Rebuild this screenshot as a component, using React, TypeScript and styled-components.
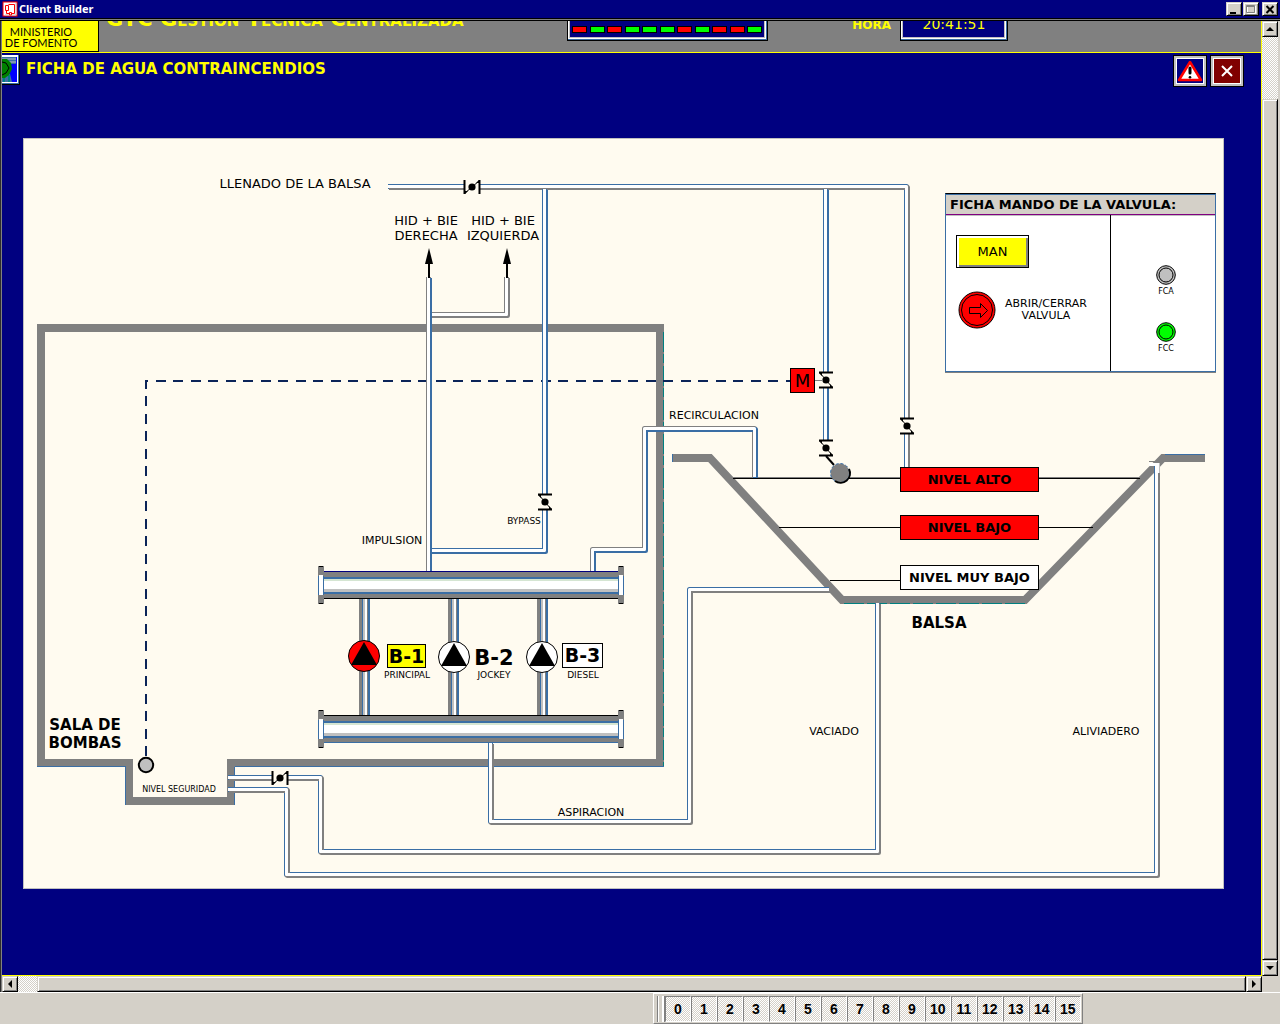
import React from "react";
import styled, { createGlobalStyle, css } from "styled-components";

const NAVY = "#000080";
const CHROME = "#d4d0c8";
const GRAY = "#808080";
const BLUE = "#3a6ea5";
const SILVER = "#c0c0c0";
const CREAM = "#fffbf0";
const YELLOW = "#ffff00";
const RED = "#ff0000";
const GREEN = "#00ff00";

const Global = createGlobalStyle`
  * { box-sizing: border-box; }
  html, body { margin: 0; padding: 0; }
  body { background: ${CHROME}; }
  body, button { font-family: "DejaVu Sans", Verdana, sans-serif; }
  button { margin: 0; padding: 0; color: #000; border-radius: 0; }
`;

const raised = css`
  border: 1px solid;
  border-color: ${CHROME} #000 #000 ${CHROME};
  box-shadow: inset 1px 1px 0 #fff, inset -1px -1px 0 ${GRAY};
  background: ${CHROME};
`;

const dither = css`
  background: repeating-conic-gradient(#fff 0 25%, ${CHROME} 0 50%) 0 0 / 2px 2px;
`;

const Shell = styled.div`
  display: flex;
  flex-direction: column;
  height: 100vh;
  overflow: hidden;
`;

/* ---------- window frame ---------- */

const TitleBar = styled.header`
  display: flex;
  align-items: center;
  gap: 1px;
  flex: none;
  height: 18px;
  padding: 0 2px;
  background: ${NAVY};
`;

const WindowTitle = styled.h1`
  flex: 1;
  margin: 0;
  font: bold 11px/16px "Noto Sans", Tahoma, sans-serif;
  color: #fff;
`;

const WindowButton = styled.button<{ $apart?: boolean }>`
  ${raised}
  display: grid;
  place-items: center;
  width: 16px;
  height: 14px;
  margin-left: ${(p) => (p.$apart ? "2px" : "0")};
`;

const FrameEdge = styled.div`
  flex: none;
  height: 3px;
  background: ${GRAY};
  border: solid #000;
  border-width: 1px 0;
`;

const Workspace = styled.main`
  display: grid;
  grid-template-columns: minmax(0, 1fr) 16px;
  grid-template-rows: minmax(0, 1fr) 16px;
  flex: 1;
  min-height: 0;
  padding-right: 2px;
  border-left: 2px groove ${GRAY};
`;

const Viewport = styled.div`
  overflow: hidden;
  background: ${NAVY};
  border: solid ${YELLOW};
  border-width: 0 1px 1px 0;
`;

/* ---------- scroll bars ---------- */

const ScrollBar = styled.div<{ $vertical?: boolean }>`
  display: flex;
  flex-direction: ${(p) => (p.$vertical ? "column" : "row")};
  ${dither}
`;

const ScrollArrow = styled.button`
  ${raised}
  display: grid;
  place-items: center;
  flex: none;
  width: 16px;
  height: 16px;
`;

const ScrollGap = styled.div<{ $size: number }>`
  flex: 0 0 ${(p) => p.$size}px;
`;

const ScrollThumb = styled.div`
  ${raised}
  flex: 1;
`;

/* ---------- banner ---------- */

const Banner = styled.div`
  display: flex;
  align-items: flex-end;
  height: 32px;
  overflow: hidden;
  background: ${GRAY};
  border-bottom: 1px solid ${YELLOW};
`;

const Ministry = styled.div`
  flex: none;
  width: 97px;
  height: 31px;
  padding: 5px 18px 0 0;
  background: ${YELLOW};
  border: solid #000;
  border-width: 0 1px 1px 0;
  font: 11px/11px Lato, "Gill Sans", sans-serif;
  text-align: center;
  white-space: nowrap;
`;

const BannerTitle = styled.div`
  flex: 0 0 468px;
  padding: 0 0 21px 7px;
  font: bold 21px/24px "DejaVu Sans", Verdana, sans-serif;
  font-variant: small-caps;
  white-space: nowrap;
  color: ${YELLOW};
`;

const Inset = styled.div<{ $width: number }>`
  display: flex;
  align-items: flex-end;
  justify-content: space-between;
  flex: 0 0 ${(p) => p.$width}px;
  height: 40px;
  margin-bottom: 11px;
  padding: 0 1px 4px;
  background: ${NAVY};
  border: 1px solid #000;
  box-shadow: inset -1px -1px 0 ${BLUE}, inset 1px 0 0 #fff, inset -2px -2px 0 #fff,
    inset 2px 0 0 ${SILVER}, inset -3px -3px 0 ${SILVER};
`;

const LedRow = styled(Inset)`
  padding: 0 5px 7px 4px;
`;

const Led = styled.span<{ $on: boolean }>`
  width: 15px;
  height: 7px;
  border: 1px solid #000;
  background: ${(p) => (p.$on ? GREEN : RED)};
`;

const Clock = styled(Inset)`
  justify-content: center;
  padding-bottom: 8px;
  font-size: 14px;
  line-height: 16px;
  color: ${YELLOW};
`;

const ClockLabel = styled.div`
  flex: 0 0 132px;
  padding: 0 9px 19px 0;
  font-size: 12px;
  font-weight: bold;
  line-height: 16px;
  text-align: right;
  color: ${YELLOW};
`;

const PageHead = styled.div`
  display: flex;
  align-items: flex-start;
  gap: 3px;
  height: 35px;
  padding: 2px 17px 0 0;
`;

const PageTitle = styled.h2`
  flex: 1;
  margin: 0 0 0 3px;
  font-size: 15px;
  font-weight: bold;
  line-height: 29px;
  color: ${YELLOW};
`;

const HeadButton = styled.button<{ $fill: string }>`
  display: grid;
  place-items: center;
  width: 34px;
  height: 32px;
  background: ${(p) => p.$fill};
  border: 1px solid #000;
  box-shadow: inset 0 0 0 2px ${SILVER}, inset 0 0 0 3px #fff;
`;

/* ---------- synoptic ---------- */

const Canvas = styled.section`
  position: relative;
  width: 1201px;
  height: 751px;
  margin: 50px 0 0 21px;
  background: ${CREAM};
  border: 1px solid ${SILVER};
`;

const Drawing = styled.svg`
  display: block;
  margin: -1px;
  font-family: "DejaVu Sans", Verdana, sans-serif;
`;

type TagProps = { $x: number; $y: number; $w: number; $h: number; $fill: string; $size: number };

const Tag = styled.div<TagProps>`
  position: absolute;
  left: ${(p) => p.$x}px;
  top: ${(p) => p.$y}px;
  display: flex;
  align-items: center;
  justify-content: center;
  width: ${(p) => p.$w}px;
  height: ${(p) => p.$h}px;
  background: ${(p) => p.$fill};
  border: 1px solid #000;
  font-size: ${(p) => p.$size}px;
  font-weight: bold;
  line-height: 1;
  white-space: nowrap;
`;

const Motor = styled(Tag)`
  font-weight: normal;
`;

const ValvePanel = styled.section`
  position: absolute;
  left: 921px;
  top: 54px;
  width: 271px;
  height: 179px;
  display: flex;
  flex-direction: column;
  background: #fff;
  border: 1px solid ${BLUE};
  border-top-color: #000;
  box-shadow: 0 1px 0 ${GRAY};
`;

const PanelTitle = styled.h3`
  flex: none;
  margin: 0;
  padding-left: 4px;
  background: ${CHROME};
  border-top: 1px solid ${BLUE};
  border-bottom: 1px solid #800080;
  box-shadow: 0 1px 0 ${SILVER};
  font-size: 13px;
  line-height: 19px;
  white-space: nowrap;
`;

const PanelBody = styled.div`
  display: flex;
  flex: 1;
  min-height: 0;
`;

const Commands = styled.div`
  display: flex;
  flex-direction: column;
  align-items: flex-start;
  gap: 23px;
  width: 165px;
  padding: 20px 0 0 10px;
  border-right: 1px solid #000;
`;

const ModeButton = styled.button`
  width: 73px;
  height: 33px;
  background: ${YELLOW};
  border: 1px solid #000;
  box-shadow: inset 2px 2px 0 #fff, inset -2px -2px 0 ${GRAY};
  font-size: 13px;
`;

const Command = styled.label`
  display: flex;
  align-items: center;
  gap: 9px;
  font-size: 11px;
  line-height: 12px;
  text-align: center;
`;

const RoundButton = styled.button`
  width: 38px;
  height: 38px;
  margin-left: 2px;
  background: none;
  border: 0;
`;

const Signals = styled.div`
  display: flex;
  flex-direction: column;
  align-items: center;
  gap: 24px;
  flex: 1;
  padding: 50px 0 0 6px;
`;

const Signal = styled.div`
  display: flex;
  flex-direction: column;
  align-items: center;
  font-size: 8px;
  line-height: 13px;
`;

/* ---------- bottom dock ---------- */

const Dock = styled.footer`
  display: flex;
  flex: none;
  height: 32px;
  padding-left: 51%;
  background: ${CHROME};
  border-top: 1px solid #fff;
`;

const ToolStrip = styled.nav`
  display: flex;
  align-items: center;
  height: 31px;
  padding: 0 1px 0 3px;
  border: 1px solid;
  border-color: #fff ${GRAY} ${GRAY} #fff;
`;

const Grip = styled.span`
  width: 8px;
  height: 26px;
  border: solid ${GRAY};
  border-width: 0 1px;
  box-shadow: inset 1px 0 0 #fff, inset -2px 0 0 #fff;
`;

const ToolButton = styled.button`
  ${dither}
  width: 26px;
  height: 26px;
  border: 1px solid;
  border-color: ${GRAY} #fff #fff ${GRAY};
  font: bold 14px/24px "Liberation Sans", Arial, sans-serif;
`;

/* ---------- drawing parts ---------- */

const Pipe = ({ d, a = BLUE, b = BLUE }: { d: string; a?: string; b?: string }) => (
  <g fill="none" strokeLinejoin="round">
    <path d={d} stroke={a} strokeWidth={5} />
    <path d={d} stroke={b} strokeWidth={5} transform="translate(1 1)" />
    <path d={d} stroke="#fff" strokeWidth={3} />
  </g>
);

const Valve = ({ x, y, upright }: { x: number; y: number; upright?: boolean }) => (
  <g transform={`translate(${x} ${y})${upright ? " rotate(90)" : ""}`}>
    <rect x={-7} y={-5} width={14} height={10} fill={CREAM} />
    <path d="M-7.500 -7V7M7.500 -7V7" stroke="#000" strokeWidth={2} />
    <path d="M-7 6L7 -6" stroke="#000" strokeWidth={1} />
    <path d="M-7 7V4L-4 4ZM7 -7V-4L4 -4Z" fill="#000" />
    <circle r={3.6} fill="#000" />
  </g>
);

const Manifold = ({ y, top, bottom }: { y: number; top: string; bottom: string }) => (
  <g transform={`translate(0 ${y})`} shapeRendering="crispEdges">
    <rect x={323} width={297} height={28} fill={GRAY} />
    <rect x={323} width={297} height={1} fill={top} />
    <rect x={323} y={27} width={297} height={1} fill={bottom} />
    <rect x={324} y={6} width={295} height={2} fill={BLUE} />
    <rect x={324} y={8} width={295} height={2} fill="#d5e5d2" />
    <rect x={324} y={10} width={295} height={8} fill="#fff" />
    <rect x={324} y={18} width={295} height={3} fill={SILVER} />
    <rect x={324} y={21} width={295} height={2} fill={BLUE} />
    {[318, 618].map((x) => (
      <g key={x}>
        <rect x={x} y={-5} width={6} height={38} fill={GRAY} />
        <rect x={x} y={5} width={6} height={19} fill={BLUE} />
        <rect x={x + 1} y={4} width={4} height={20} fill="#fff" />
        <path d={`M${x + 1} -4.500h4M${x + 1} 32.500h4`} stroke="#000" />
      </g>
    ))}
  </g>
);

const Riser = ({ x }: { x: number }) => (
  <g transform={`translate(${x} 599)`} shapeRendering="crispEdges">
    <rect width={11} height={117} fill={GRAY} />
    <rect x={3} width={1} height={117} fill={BLUE} />
    <rect x={4} width={2} height={117} fill={SILVER} />
    <rect x={6} width={2} height={117} fill="#fff" />
    <rect x={9} width={2} height={117} fill={BLUE} />
  </g>
);

const Pump = ({ x, y, fill }: { x: number; y: number; fill: string }) => (
  <g>
    <circle cx={x} cy={y} r={15.5} fill={fill} stroke="#000" />
    <path d={`M${x} ${y - 14}L${x + 13} ${y + 9}H${x - 13}Z`} fill="#000" />
  </g>
);

const FlowArrow = ({ x }: { x: number }) => (
  <g>
    <path d={`M${x} 248L${x + 4} 264H${x - 4}Z`} fill="#000" />
    <path d={`M${x} 262V278`} stroke="#000" strokeWidth={2} />
  </g>
);

type Note = { t: string; x: number; y: number; s: number; bold?: boolean };

const NOTES: Note[] = [
  { t: "LLENADO DE LA BALSA", x: 295, y: 188, s: 13 },
  { t: "HID + BIE", x: 426, y: 225, s: 13 },
  { t: "DERECHA", x: 426, y: 240, s: 13 },
  { t: "HID + BIE", x: 503, y: 225, s: 13 },
  { t: "IZQUIERDA", x: 503, y: 240, s: 13 },
  { t: "BYPASS", x: 524, y: 524, s: 9 },
  { t: "IMPULSION", x: 392, y: 544, s: 11 },
  { t: "RECIRCULACION", x: 714, y: 419, s: 11 },
  { t: "PRINCIPAL", x: 407, y: 678, s: 9 },
  { t: "JOCKEY", x: 494, y: 678, s: 9 },
  { t: "DIESEL", x: 583, y: 678, s: 9 },
  { t: "NIVEL SEGURIDAD", x: 179, y: 792, s: 8 },
  { t: "ASPIRACION", x: 591, y: 816, s: 11 },
  { t: "VACIADO", x: 834, y: 735, s: 11 },
  { t: "ALIVIADERO", x: 1106, y: 735, s: 11 },
  { t: "SALA DE", x: 85, y: 730, s: 15, bold: true },
  { t: "BOMBAS", x: 85, y: 748, s: 15, bold: true },
  { t: "BALSA", x: 939, y: 628, s: 15, bold: true },
  { t: "B-2", x: 494, y: 665, s: 21, bold: true },
];

const Synoptic = () => (
  <Drawing width={1201} height={751} viewBox="23 138 1201 751" role="img" aria-label="Agua contraincendios">
    <path d="M41 328H660V763H231V801H129V763H41Z" fill="none" stroke={GRAY} strokeWidth={8} />
    <path d="M129 763H231" stroke={CREAM} strokeWidth={8} />
    <path d="M129 759V801H231V759" fill="none" stroke={GRAY} strokeWidth={8} />
    <path d="M663.500 332V766" stroke="#008080" strokeDasharray="20 2 9 3" />
    <path d="M37 766.500H126M235 766.500H664M125.500 767V805M234.500 767V805" stroke={BLUE} />

    <path d="M672 458H710L842 600H1025L1163 458H1205" fill="none" stroke={GRAY} strokeWidth={8} />
    <path d="M844 603.500H1027" stroke="#008080" strokeDasharray="20 3" />
    <path d="M1165 454.500H1205M672.500 454V462" stroke={BLUE} />
    <path d="M733 478.500H900M1039 478.500H1140M779 527.500H900M1039 527.500H1093M830 580.500H900" stroke="#000" />
    <path d="M733 477.500H900M1039 477.500H1140" stroke={GRAY} />

    <path d="M146 756V381H790" fill="none" stroke="#0b2458" strokeWidth={2} strokeDasharray="10 7 10 8" />

    <Pipe d="M388 186.500H906.500V467" b={GRAY} />
    <Pipe d="M825.500 189V440" />
    <Pipe d="M544.500 189V550.500H431" />
    <Pipe d="M506.500 277V314.500H431" a={GRAY} b={GRAY} />
    <Pipe d="M428.500 277V571" a={GRAY} />
    <Pipe d="M754.500 477V428.500H644.500V549.500H592.500V571" a={GRAY} />
    <Pipe d="M829 589.500H689.500V821.500H490.500V743" a={BLUE} b={GRAY} />
    <Pipe d="M877.500 603V851.500H320.500V777.500H228" a={BLUE} b={GRAY} />
    <Pipe d="M1156.500 466V874.500H286.500V789.500H228" a={BLUE} b={GRAY} />
    <path d="M1149 464.500H1158V473" fill="none" stroke="#fff" strokeWidth={3} />
    <path d="M1149 461.500H1156" stroke={GRAY} />

    <FlowArrow x={429} />
    <FlowArrow x={507} />
    <Valve x={472} y={187} />
    <Valve x={280} y={778} />
    <Valve x={545} y={502} upright />
    <Valve x={826} y={380} upright />
    <Valve x={826} y={448} upright />
    <Valve x={907} y={426} upright />
    <path d="M815 380.500H823" stroke={GRAY} />
    <path d="M826 456L834 465" stroke="#000" strokeWidth={2} />
    <circle cx={840} cy={473} r={9.5} fill={GRAY} stroke={BLUE} strokeDasharray="3 2" />
    <path d="M849 469A9.500 9.500 0 0 1 835 481" fill="none" stroke="#000" strokeWidth={2} />
    <circle cx={146} cy={765} r={7.2} fill={SILVER} stroke="#000" strokeWidth={2} />

    <Riser x={359} />
    <Riser x={448} />
    <Riser x={537} />
    <Manifold y={571} top={NAVY} bottom="#000" />
    <Manifold y={715} top="#000" bottom={BLUE} />
    <Pump x={364} y={656} fill={RED} />
    <Pump x={454} y={657} fill="#fff" />
    <Pump x={542} y={657} fill="#fff" />

    {NOTES.map((n, i) => (
      <text key={i} x={n.x} y={n.y} fontSize={n.s} fontWeight={n.bold ? "bold" : "normal"} textAnchor="middle">
        {n.t}
      </text>
    ))}
  </Drawing>
);

const Lamp = ({ fill }: { fill: string }) => (
  <svg width="20" height="20" viewBox="0 0 20 20">
    <circle cx="10" cy="10" r="9.300" fill={fill} stroke="#000" />
    <circle cx="10" cy="10" r="7" fill={fill} stroke="#000" />
  </svg>
);

const Arrow = ({ d }: { d: string }) => (
  <svg width="8" height="8" viewBox="0 0 8 8">
    <path d={d} fill="#000" />
  </svg>
);

const STATES = [false, true, false, true, true, true, false, true, false, false, true];

export default function App() {
  return (
    <Shell>
      <Global />
      <TitleBar>
        <svg width="16" height="16" viewBox="0 0 16 16" fill="none">
          <rect x="1" y="1" width="14" height="14" fill="#fff" stroke={RED} />
          <path d="M14 2v12H3" stroke={SILVER} />
          <path d="M6.500 3.500H12.500V12.500H9M3.500 4.500H6.500V9.500H3.500ZM4.500 9.500V12.500H7.500M7.500 11.500H9.500V14H7.500Z" stroke={RED} />
        </svg>
        <WindowTitle>Client Builder</WindowTitle>
        <WindowButton aria-label="Minimizar">
          <svg width="10" height="9" viewBox="0 0 10 9"><path d="M1 8H7" stroke="#000" strokeWidth="2" /></svg>
        </WindowButton>
        <WindowButton aria-label="Maximizar">
          <svg width="10" height="9" viewBox="0 0 10 9" fill="none">
            <path d="M1.500 1V8.500H9.500V1" stroke="#fff" />
            <path d="M.5 .5H8.500V7.500H.5ZM0 1.500H9" stroke={GRAY} />
          </svg>
        </WindowButton>
        <WindowButton aria-label="Cerrar ventana" $apart>
          <svg width="10" height="9" viewBox="0 0 10 9"><path d="M1.500 1L8.500 8M8.500 1L1.500 8" stroke="#000" strokeWidth="2" /></svg>
        </WindowButton>
      </TitleBar>
      <FrameEdge />

      <Workspace>
        <Viewport>
          <Banner>
            <Ministry>MINISTERIO<br />DE FOMENTO</Ministry>
            <BannerTitle>GTC Gestión Técnica Centralizada</BannerTitle>
            <LedRow $width={201}>
              {STATES.map((on, i) => <Led key={i} $on={on} />)}
            </LedRow>
            <ClockLabel>HORA</ClockLabel>
            <Clock $width={108}>20:41:51</Clock>
          </Banner>

          <PageHead>
            <svg width="18" height="30" viewBox="0 0 18 30">
              <rect width="18" height="30" fill="#000" />
              <rect width="17" height="29" fill={BLUE} />
              <rect width="16" height="28" fill="#fff" />
              <rect y="2" width="15" height="25" fill="#0000ff" />
              <path d="M0 2H14V9H0Z" fill={BLUE} />
              <path d="M0 4H14M5 7H14" stroke={SILVER} />
              <path d="M0 19H8L10 27H0Z" fill={BLUE} />
              <path d="M2 19V27M7 20V27" stroke="#008080" strokeWidth="2" />
              <path d="M0 4H5L9 8L10 14L7 20L3 23H0Z" fill="#008000" />
              <path d="M0 7L4 8L7 13L4 18L0 20" fill="none" stroke="#000" />
            </svg>
            <PageTitle>FICHA DE AGUA CONTRAINCENDIOS</PageTitle>
            <HeadButton $fill={NAVY} aria-label="Alarmas">
              <svg width="26" height="22" viewBox="0 0 26 22">
                <path d="M13 2L24 20H2Z" fill="#fff" stroke={RED} strokeWidth="2.500" strokeLinejoin="round" />
                <path d="M13 8V13" stroke="#000" strokeWidth="3" strokeLinecap="round" />
                <circle cx="13" cy="17.300" r="1.300" fill="#000" />
              </svg>
            </HeadButton>
            <HeadButton $fill="#800000" aria-label="Cerrar ficha">
              <svg width="12" height="12" viewBox="0 0 12 12">
                <path d="M1 1L11 11M11 1L1 11" stroke="#fff" strokeWidth="2" />
              </svg>
            </HeadButton>
          </PageHead>

          <Canvas>
            <Synoptic />
            <Motor $x={766} $y={229} $w={25} $h={25} $fill={RED} $size={18}>M</Motor>
            <Tag $x={876} $y={328} $w={139} $h={25} $fill={RED} $size={13}>NIVEL ALTO</Tag>
            <Tag $x={876} $y={376} $w={139} $h={25} $fill={RED} $size={13}>NIVEL BAJO</Tag>
            <Tag $x={876} $y={426} $w={139} $h={25} $fill="#fff" $size={13}>NIVEL MUY BAJO</Tag>
            <Tag $x={363} $y={505} $w={39} $h={24} $fill={YELLOW} $size={19}>B-1</Tag>
            <Tag $x={538} $y={504} $w={41} $h={25} $fill="#fff" $size={19}>B-3</Tag>

            <ValvePanel>
              <PanelTitle>FICHA MANDO DE LA VALVULA:</PanelTitle>
              <PanelBody>
                <Commands>
                  <ModeButton>MAN</ModeButton>
                  <Command>
                    <RoundButton>
                      <svg width="38" height="38" viewBox="0 0 38 38" fill="none" stroke="#000">
                        <circle cx="19" cy="19" r="18" fill={RED} />
                        <circle cx="19" cy="19" r="15.500" />
                        <path d="M11.500 16.500H22.500V12.500L29.500 19.500L22.500 26.500V22.500H11.500Z" />
                      </svg>
                    </RoundButton>
                    <span>ABRIR/CERRAR<br />VALVULA</span>
                  </Command>
                </Commands>
                <Signals>
                  <Signal><Lamp fill={SILVER} />FCA</Signal>
                  <Signal><Lamp fill={GREEN} />FCC</Signal>
                </Signals>
              </PanelBody>
            </ValvePanel>
          </Canvas>
        </Viewport>

        <ScrollBar $vertical>
          <ScrollArrow aria-label="Subir"><Arrow d="M4 2L8 6H0Z" /></ScrollArrow>
          <ScrollGap $size={62} />
          <ScrollThumb />
          <ScrollArrow aria-label="Bajar"><Arrow d="M0 2H8L4 6Z" /></ScrollArrow>
        </ScrollBar>
        <ScrollBar>
          <ScrollArrow aria-label="Izquierda"><Arrow d="M6 0V8L2 4Z" /></ScrollArrow>
          <ScrollGap $size={19} />
          <ScrollThumb />
          <ScrollArrow aria-label="Derecha"><Arrow d="M2 0L6 4L2 8Z" /></ScrollArrow>
        </ScrollBar>
      </Workspace>

      <Dock>
        <ToolStrip>
          <Grip />
          {Array.from({ length: 16 }, (_, i) => <ToolButton key={i}>{i}</ToolButton>)}
        </ToolStrip>
      </Dock>
    </Shell>
  );
}
